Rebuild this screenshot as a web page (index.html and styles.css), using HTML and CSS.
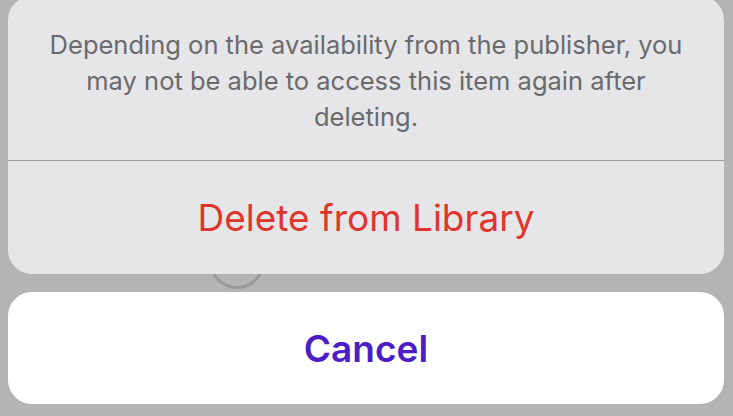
FILE: index.html
```html
<!DOCTYPE html>
<html>
<head>
<meta charset="utf-8">
<link rel="stylesheet" href="styles.css">
</head>
<body>
<div class="backdrop">
  <div class="ghost-circle"></div>
</div>
<div class="sheet">
  <div class="group">
    <div class="message">Depending on the availability from the publisher, you may not be able to access this item again after deleting.</div>
    <div class="divider"></div>
    <div class="action destructive">Delete from Library</div>
  </div>
  <div class="cancel">Cancel</div>
</div>
</body>
</html>
```

FILE: styles.css
```css
html, body {
  margin: 0;
  padding: 0;
  width: 733px;
  height: 416px;
  overflow: hidden;
  background: #b4b4b4;
  font-family: "Inter", "Roboto", sans-serif;
}

.backdrop {
  position: absolute;
  inset: 0;
}

.ghost-circle {
  position: absolute;
  left: 209px;
  top: 233px;
  width: 50px;
  height: 50px;
  border: 3px solid #9b989c;
  border-radius: 50%;
}

.sheet {
  position: relative;
  display: flex;
  flex-direction: column;
  gap: 18px;
  padding: 0 9px 12px 8px;
  margin-top: -4px;
}

.group {
  background: #e6e6e8;
  border-radius: 24px;
  display: flex;
  flex-direction: column;
  height: 278px;
}

.message {
  box-sizing: border-box;
  height: 164px;
  padding: 31px 36px 0;
  text-align: center;
  color: #6a6a6c;
  font-size: 25.5px;
  line-height: 36px;
}

.divider {
  height: 1px;
  background: #a09da1;
}

.action {
  flex: 1;
  display: flex;
  align-items: center;
  justify-content: center;
  font-size: 37px;
}

.destructive {
  color: #e1342c;
}

.cancel {
  height: 112px;
  background: #ffffff;
  border-radius: 24px;
  display: flex;
  align-items: center;
  justify-content: center;
  color: #4a1dc6;
  font-size: 37px;
  font-weight: 600;
}
```
